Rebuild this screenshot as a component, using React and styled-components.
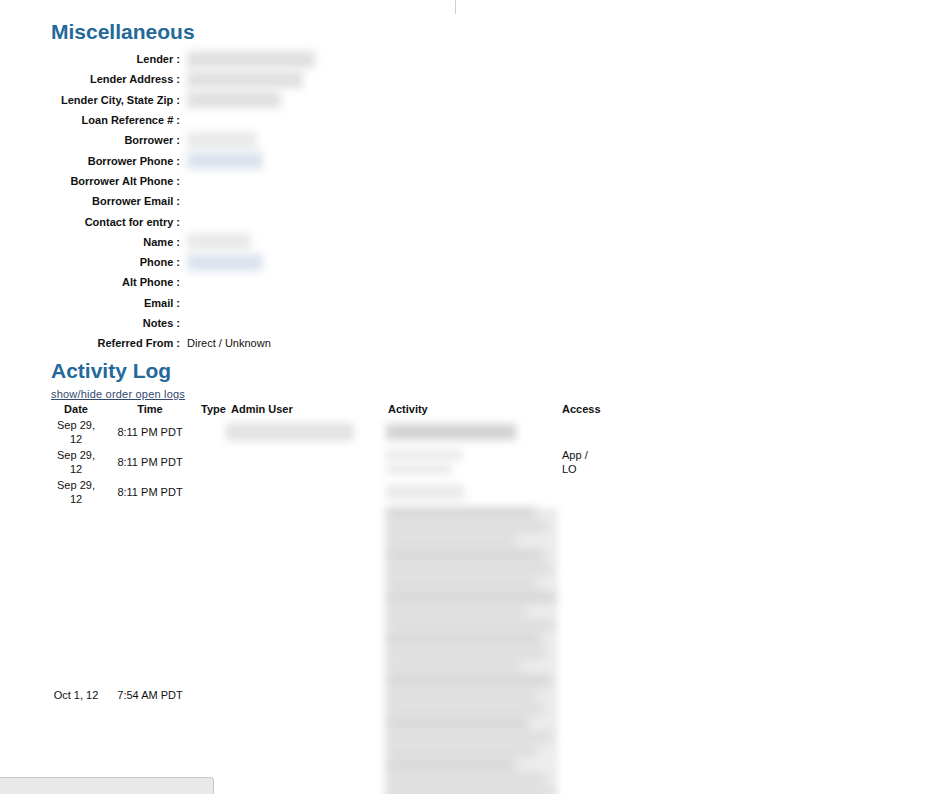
import React from "react";
import styled, { createGlobalStyle } from "styled-components";

const GlobalStyle = createGlobalStyle`
  body {
    margin: 0;
    background: #fff;
    color: #111;
    font-family: "Liberation Sans", Arial, Helvetica, sans-serif;
    font-size: 11px;
  }
`;

const fields = [
  { label: "Lender :", blur: { w: 128, tone: "gray" } },
  { label: "Lender Address :", blur: { w: 116, tone: "gray" } },
  { label: "Lender City, State Zip :", blur: { w: 94, tone: "gray" } },
  { label: "Loan Reference # :" },
  { label: "Borrower :", blur: { w: 70, tone: "light" } },
  { label: "Borrower Phone :", blur: { w: 76, tone: "blue" } },
  { label: "Borrower Alt Phone :" },
  { label: "Borrower Email :" },
  { label: "Contact for entry :" },
  { label: "Name :", blur: { w: 64, tone: "light" } },
  { label: "Phone :", blur: { w: 76, tone: "blue" } },
  { label: "Alt Phone :" },
  { label: "Email :" },
  { label: "Notes :" },
  { label: "Referred From :", text: "Direct / Unknown" },
];

const tones = {
  gray: "#e0e0e0",
  light: "#e9e9e9",
  blue: "#dbe2ee",
  dark: "#d2d2d2",
  line: "#dadada",
};

const bigActivity = [
  150, 162, 130, 158, 166, 150, 170, 140, 168, 155, 160, 135, 165, 150, 158,
  142, 166, 150, 130, 160, 168, 145, 158, 150, 165, 140,
];

const logs = [
  {
    date: "Sep 29, 12",
    time: "8:11 PM PDT",
    admin: true,
    activity: [{ w: 130, tone: "dark", h: 16 }],
  },
  {
    date: "Sep 29, 12",
    time: "8:11 PM PDT",
    access: "App / LO",
    activity: [
      { w: 76, tone: "light", h: 10 },
      { w: 66, tone: "light", h: 10 },
    ],
  },
  {
    date: "Sep 29, 12",
    time: "8:11 PM PDT",
    activity: [{ w: 78, tone: "light", h: 14 }],
  },
  {
    date: "Oct 1, 12",
    time: "7:54 AM PDT",
    activity: bigActivity.map((w, i) => ({
      w,
      tone: i % 3 === 0 ? "dark" : "line",
      h: 10,
    })),
    tall: true,
  },
];

const App = () => {
  return (
    <>
      <GlobalStyle />
      <TopBar>
        <Hairline />
      </TopBar>
      <Page>
        <SectionTitle>Miscellaneous</SectionTitle>
        <FieldGrid>
          {fields.map((f) => (
            <React.Fragment key={f.label}>
              <Label>{f.label}</Label>
              <Value>
                {f.blur && <Smudge $w={f.blur.w} $tone={f.blur.tone} $h={17} />}
                {f.text}
              </Value>
            </React.Fragment>
          ))}
        </FieldGrid>

        <SectionTitle $top>Activity Log</SectionTitle>
        <ToggleLink href="#">show/hide order open logs</ToggleLink>

        <LogTable>
          <colgroup>
            <col style={{ width: 50 }} />
            <col style={{ width: 98 }} />
            <col style={{ width: 30 }} />
            <col style={{ width: 157 }} />
            <col style={{ width: 174 }} />
            <col style={{ width: 40 }} />
          </colgroup>
          <thead>
            <tr>
              <Th $center>Date</Th>
              <Th $center>Time</Th>
              <Th>Type</Th>
              <Th>Admin User</Th>
              <Th>Activity</Th>
              <Th>Access</Th>
            </tr>
          </thead>
          <tbody>
            {logs.map((row, i) => (
              <tr key={i}>
                <Td $center>{row.date}</Td>
                <Td $center>{row.time}</Td>
                <Td />
                <Td>{row.admin && <AdminSmudge />}</Td>
                <Td>
                  <ActivityStack $tall={row.tall}>
                    {row.activity.map((a, j) => (
                      <Smudge key={j} $w={a.w} $tone={a.tone} $h={a.h} />
                    ))}
                  </ActivityStack>
                </Td>
                <Td>{row.access}</Td>
              </tr>
            ))}
          </tbody>
        </LogTable>
      </Page>
      <StatusBar />
    </>
  );
};

const TopBar = styled.div`
  height: 14px;
  display: flex;
`;

const Hairline = styled.div`
  width: 1px;
  height: 14px;
  margin-left: 455px;
  background: #cfcfcf;
`;

const Page = styled.div`
  padding: 6px 0 0 51px;
`;

const SectionTitle = styled.h2`
  margin: ${(p) => (p.$top ? "6px 0 4px" : "0 0 5px")};
  font-size: 21px;
  line-height: 24px;
  font-weight: bold;
  color: #23699a;
`;

const FieldGrid = styled.div`
  display: grid;
  grid-template-columns: 129px 1fr;
  grid-auto-rows: 20.3px;
  column-gap: 7px;
  width: 420px;
`;

const Label = styled.div`
  display: flex;
  align-items: center;
  justify-content: flex-end;
  font-weight: bold;
  white-space: nowrap;
`;

const Value = styled.div`
  display: flex;
  align-items: center;
`;

const Smudge = styled.div`
  width: ${(p) => p.$w}px;
  height: ${(p) => p.$h || 12}px;
  background: ${(p) => tones[p.$tone]};
  filter: blur(4px);
  flex-shrink: 0;
`;

const AdminSmudge = styled.div`
  width: 128px;
  height: 18px;
  margin-left: -5px;
  background: #e2e2e2;
  filter: blur(4px);
`;

const ActivityStack = styled.div`
  display: flex;
  flex-direction: column;
  gap: 4px;
  margin-left: -2px;
  min-height: ${(p) => (p.$tall ? "374px" : "0")};
  justify-content: ${(p) => (p.$tall ? "flex-start" : "center")};
  background: ${(p) => (p.$tall ? "#ededed" : "transparent")};
  filter: ${(p) => (p.$tall ? "blur(3px)" : "none")};
`;

const ToggleLink = styled.a`
  display: block;
  line-height: 14px;
  color: #34496e;
  text-decoration: underline;
  letter-spacing: 0.2px;
`;

const LogTable = styled.table`
  border-collapse: collapse;
  table-layout: fixed;
  width: 549px;
  margin-top: 1px;
`;

const Th = styled.th`
  padding: 1px 2px;
  font-weight: bold;
  line-height: 13px;
  text-align: ${(p) => (p.$center ? "center" : "left")};
  white-space: nowrap;
`;

const Td = styled.td`
  padding: 1px 2px;
  line-height: 14px;
  vertical-align: middle;
  text-align: ${(p) => (p.$center ? "center" : "left")};
`;

const StatusBar = styled.div`
  position: fixed;
  left: 0;
  bottom: 0;
  width: 213px;
  height: 16px;
  background: #e9e9e9;
  border-top: 1px solid #c6c6c6;
  border-right: 1px solid #c6c6c6;
  border-top-right-radius: 4px;
`;

export default App;
